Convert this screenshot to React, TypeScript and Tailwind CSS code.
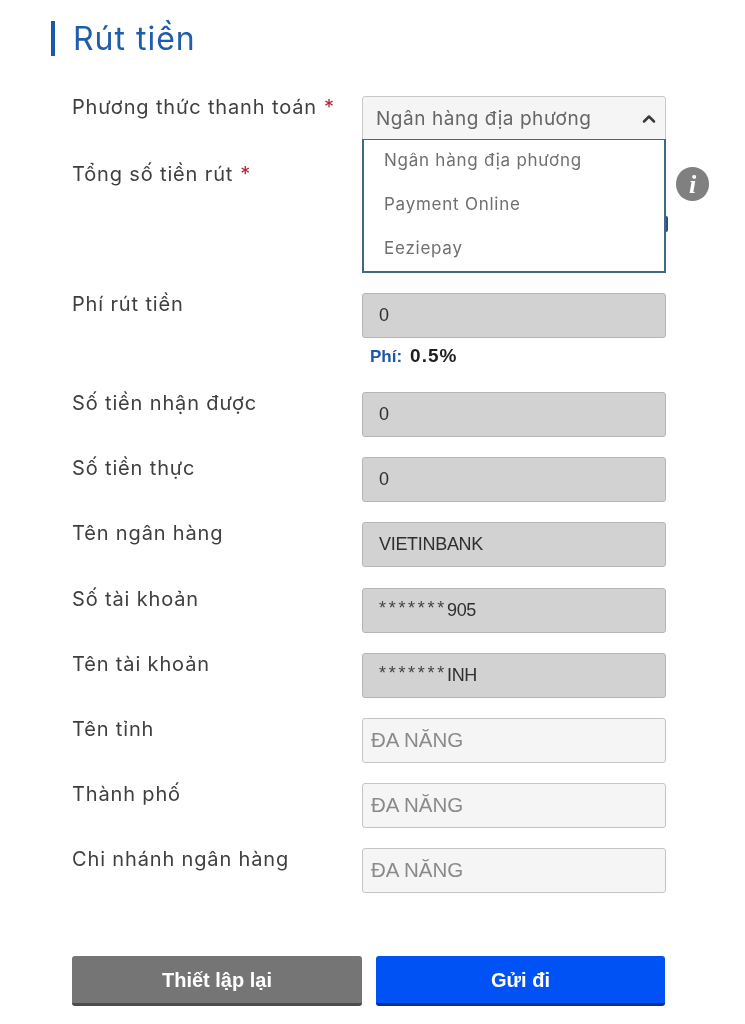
import { ChevronUp } from "lucide-react";

const labelFont = "font-['Inter',sans-serif]";
const fieldFont = "font-['Liberation_Sans',Arial,sans-serif]";

function Label({ text, required }: { text: string; required?: boolean }) {
  return (
    <div className={`${labelFont} -mt-[1px] whitespace-nowrap text-[20px] leading-6 tracking-[0.85px] text-[#3f3f3f]`}>
      {text}
      {required && <span className="ml-[7px] text-[#b3263a]">*</span>}
    </div>
  );
}

function LockedField({ children }: { children: React.ReactNode }) {
  return (
    <div className={`${fieldFont} flex h-[45px] w-[304px] items-center rounded-[3px] border border-[#b5b5b5] bg-[#d2d2d2] pl-4 text-[18px] tracking-[-0.3px] text-[#2f2f2f]`}>
      {children}
    </div>
  );
}

function Stars() {
  return <span className="-mt-[4px] text-[18px] tracking-[2.7px] text-[#444444]">*******</span>;
}

function OpenField({ value }: { value: string }) {
  return (
    <div className={`${fieldFont} flex h-[45px] w-[304px] items-center rounded-[3px] border border-[#c4c4c4] bg-[#f5f5f5] pl-2 text-[20.5px] text-[#8a8a8a]`}>
      {value}
    </div>
  );
}

function Row({ label, children, className }: { label: string; children: React.ReactNode; className?: string }) {
  return (
    <div className={`flex ${className ?? ""}`}>
      <div className="w-[290px] shrink-0">
        <Label text={label} />
      </div>
      {children}
    </div>
  );
}

export default function App() {
  return (
    <div className="h-[1024px] w-[745px] overflow-hidden bg-white pt-[21px] blur-[0.5px]">
      {/* tiêu đề */}
      <div className="ml-[51px] flex h-[35px] items-center border-l-[4px] border-[#1a57ad] pl-[18px]">
        <h1 className={`${labelFont} text-[32px] leading-none tracking-[1px] text-[#1f5cab]`}>Rút tiền</h1>
      </div>

      <div className="pl-[72px] pt-[40px]">
        {/* phương thức + dropdown */}
        <div className="flex">
          <div className="w-[290px] shrink-0">
            <Label text="Phương thức thanh toán" required />
            <div className="mt-[44px]">
              <Label text="Tổng số tiền rút" required />
            </div>
          </div>
          <div className="relative h-[197px] w-[304px]">
            <div className={`${labelFont} flex h-[44px] items-center justify-between rounded-t-[3px] border border-[#c8c8c8] bg-[#f5f5f5] pl-[13px] pr-[6px] pt-[2px] text-[19px] tracking-[0.55px] text-[#666666]`}>
              Ngân hàng địa phương
              <ChevronUp size={20} strokeWidth={3} className="text-[#3a3a3a]" />
            </div>
            <div className="absolute left-[304px] top-[120px] h-[16px] w-[2px] rounded-r bg-[#2c4f7c]" />
            <div className="absolute left-0 top-[43px] h-[134px] w-[304px] border-2 border-t-[1.5px] border-[#3f6a84] bg-white">
              <ul className={`${labelFont} -mt-[2px] pl-[20px] text-[17px] leading-[44px] tracking-[0.75px] text-[#6f6f6f]`}>
                <li>Ngân hàng địa phương</li>
                <li>Payment Online</li>
                <li>Eeziepay</li>
              </ul>
            </div>
            <div className="absolute left-[314px] top-[71px] flex h-[34px] w-[33px] items-center justify-center rounded-full bg-[#808080] font-['Liberation_Serif',serif] text-[26px] font-bold italic text-white">
              i
            </div>
          </div>
        </div>

        <Row label="Phí rút tiền">
          <div>
            <LockedField>0</LockedField>
            <div className={`${fieldFont} mt-[8px] flex items-baseline pl-2 text-[17px] font-bold leading-5 text-[#1f1f1f]`}>
              <span className="mr-[8px] text-[#1a57ad]">Phí:</span>
              <span className="text-[19px] tracking-[1px]">0.5%</span>
            </div>
          </div>
        </Row>

        <div className="mt-[25px] flex flex-col gap-5">
          <Row label="Số tiền nhận được">
            <LockedField>0</LockedField>
          </Row>
          <Row label="Số tiền thực">
            <LockedField>0</LockedField>
          </Row>
          <Row label="Tên ngân hàng">
            <LockedField>VIETINBANK</LockedField>
          </Row>
          <Row label="Số tài khoản" className="mt-px">
            <LockedField>
              <Stars />
              905
            </LockedField>
          </Row>
          <Row label="Tên tài khoản">
            <LockedField>
              <Stars />
              INH
            </LockedField>
          </Row>
          <Row label="Tên tỉnh">
            <OpenField value="ĐA NĂNG" />
          </Row>
          <Row label="Thành phố">
            <OpenField value="ĐA NĂNG" />
          </Row>
          <Row label="Chi nhánh ngân hàng">
            <OpenField value="ĐA NĂNG" />
          </Row>
        </div>

        <div className={`${fieldFont} mt-[63px] flex gap-[14px] text-[20px] font-bold text-white`}>
          <button className="h-[50px] w-[290px] rounded-[3px] border-b-[3px] border-[#4c4c4c] bg-[#757575]">
            Thiết lập lại
          </button>
          <button className="h-[50px] w-[289px] rounded-[3px] border-b-[3px] border-[#0a2f9a] bg-[#0052f5]">
            Gửi đi
          </button>
        </div>
      </div>
    </div>
  );
}
